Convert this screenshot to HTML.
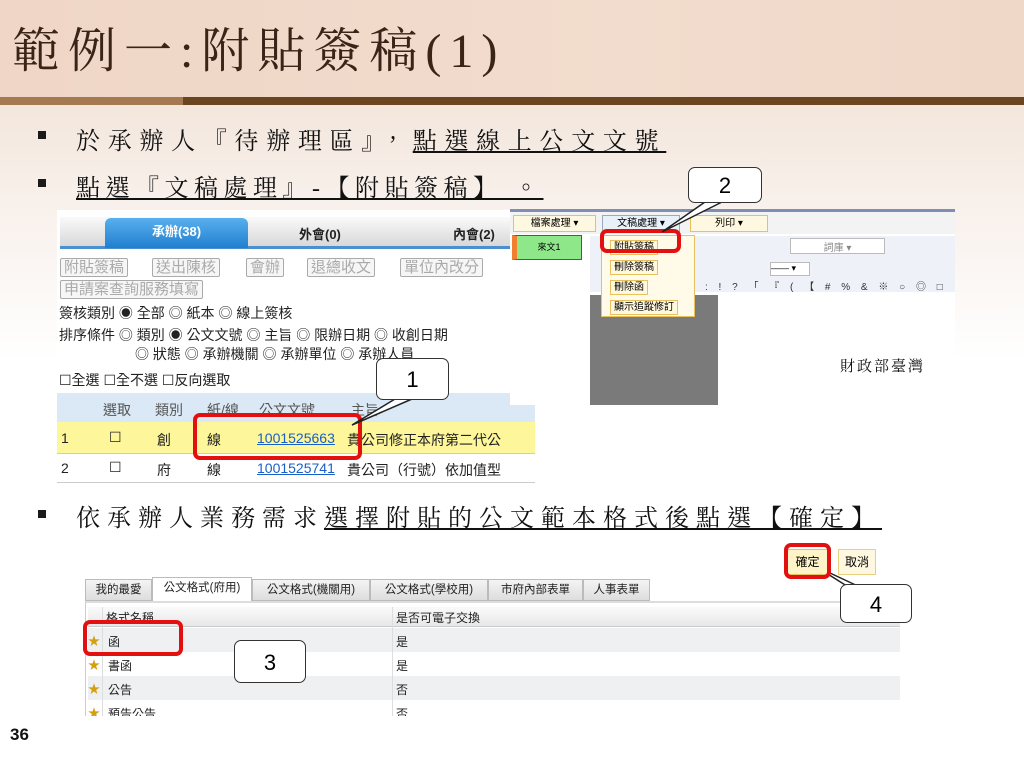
<!DOCTYPE html>
<html><head><meta charset="utf-8"><style>
*{margin:0;padding:0;box-sizing:border-box}
body{width:1024px;height:768px;position:relative;overflow:hidden;background:linear-gradient(180deg,#f3e6dc 100px,#f7eee8 180px,#fff 360px);font-family:"Liberation Sans","Noto Sans CJK TC",sans-serif}
.a{position:absolute}
.serif{font-family:"Liberation Serif","Noto Serif CJK TC",serif;color:#111;white-space:nowrap}
.bul{position:absolute;left:38px;width:8px;height:8px;background:#1a1a1a}
.cb{position:absolute;background:#fff;border:1.5px solid #333;border-radius:7px;font-size:22px;text-align:center;color:#000}
.red{position:absolute;border:4px solid #e31010;border-radius:7px}
.s{font-size:14px;color:#222;white-space:nowrap}
.btn{position:absolute;border:1px solid #aaa;border-radius:2px;color:#aaa;font-size:15px;padding:0 3px;height:19px;line-height:18px;background:#f6f6f6;white-space:nowrap}
.mi{position:absolute;left:8px;height:15px;border:1px solid #e8c060;background:#fff8dd;font-size:10px;padding:0 3px;line-height:13px;white-space:nowrap}
</style></head><body>
<div class="a" style="left:0;top:0;width:1024px;height:97px;background:linear-gradient(90deg,#efd6c6,#f2dccd 60%,#f0d8c8)"></div>
<div class="a serif" style="left:12px;top:12px;font-size:48px;color:#3a2418;letter-spacing:8px">範例一:附貼簽稿(1)</div>
<div class="a" style="left:0;top:97px;width:183px;height:8px;background:#a57a52"></div>
<div class="a" style="left:183px;top:97px;width:841px;height:8px;background:#6a4522"></div>

<div class="bul" style="top:131px"></div>
<div class="a serif" style="left:76px;top:121px;font-size:24px;letter-spacing:7.7px">於承辦人『待辦理區』，<u>點選線上公文文號</u></div>
<div class="bul" style="top:179px"></div>
<div class="a serif" style="left:76px;top:168px;font-size:24px;letter-spacing:5.5px"><u>點選『文稿處理』-【附貼簽稿】 。</u></div>

<!-- screenshot 1 -->
<div class="a" style="left:57px;top:210px;width:478px;height:280px;background:#fff;overflow:hidden">
 <div class="a" style="left:3px;top:7px;width:457px;height:32px;background:linear-gradient(#fafafa,#d8d8d8);border-bottom:3px solid #4a90d0"></div>
 <div class="a" style="left:48px;top:8px;width:143px;height:30px;background:linear-gradient(#5ab0ee,#1f7fcf);border-radius:6px 6px 0 0;color:#fff;font-weight:bold;font-size:13px;text-align:center;line-height:28px">承辦(38)</div>
 <div class="a" style="left:242px;top:14px;font-weight:bold;font-size:13px;color:#222">外會(0)</div>
 <div class="a" style="left:396px;top:14px;font-weight:bold;font-size:13px;color:#222">內會(2)</div>
 <div class="btn" style="left:3px;top:48px">附貼簽稿</div>
 <div class="btn" style="left:95px;top:48px">送出陳核</div>
 <div class="btn" style="left:189px;top:48px">會辦</div>
 <div class="btn" style="left:250px;top:48px">退總收文</div>
 <div class="btn" style="left:343px;top:48px">單位內改分</div>
 <div class="btn" style="left:3px;top:70px">申請案查詢服務填寫</div>
 <div class="a s" style="left:2px;top:93px">簽核類別 ◉ 全部 ◎ 紙本 ◎ 線上簽核</div>
 <div class="a s" style="left:2px;top:115px">排序條件 ◎ 類別 ◉ 公文文號 ◎ 主旨 ◎ 限辦日期 ◎ 收創日期</div>
 <div class="a s" style="left:78px;top:134px">◎ 狀態 ◎ 承辦機關 ◎ 承辦單位 ◎ 承辦人員</div>
 <div class="a s" style="left:2px;top:160px">☐全選 ☐全不選 ☐反向選取</div>
 <div class="a" style="left:0;top:183px;width:478px;height:29px;background:#dbe8f5"></div>
 <div class="a" style="left:0;top:212px;width:478px;height:31px;background:#fdf69a"></div>
 <div class="a" style="left:0;top:243px;width:478px;height:1px;background:#ccc"></div>
 <div class="a" style="left:0;top:272px;width:478px;height:1px;background:#ccc"></div>
 <div class="a s" style="left:46px;top:190px;color:#555">選取</div>
 <div class="a s" style="left:98px;top:190px;color:#555">類別</div>
 <div class="a s" style="left:150px;top:190px;color:#555">紙/線</div>
 <div class="a s" style="left:202px;top:190px;color:#555">公文文號</div>
 <div class="a s" style="left:294px;top:190px;color:#555">主旨</div>
 <div class="a s" style="left:4px;top:220px">1</div><div class="a s" style="left:52px;top:219px">☐</div><div class="a s" style="left:100px;top:220px">創</div><div class="a s" style="left:150px;top:220px">線</div><div class="a s" style="left:200px;top:220px;color:#1a5fc8;text-decoration:underline">1001525663</div><div class="a s" style="left:290px;top:220px">貴公司修正本府第二代公</div>
 <div class="a s" style="left:4px;top:250px">2</div><div class="a s" style="left:52px;top:249px">☐</div><div class="a s" style="left:100px;top:250px">府</div><div class="a s" style="left:150px;top:250px">線</div><div class="a s" style="left:200px;top:250px;color:#1a5fc8;text-decoration:underline">1001525741</div><div class="a s" style="left:290px;top:250px">貴公司（行號）依加值型</div>
</div>
<div class="red" style="left:193px;top:413px;width:169px;height:47px"></div>

<!-- screenshot 2 -->
<div class="a" style="left:510px;top:209px;width:445px;height:196px;background:#fff;overflow:hidden;border-top:3px solid #7f8fb0">
 <div class="a" style="left:0;top:0;width:445px;height:22px;background:#f3f3f3"></div>
 <div class="a" style="left:3px;top:3px;width:83px;height:17px;border:1px solid #e8c060;background:#fff8e0;font-size:10px;text-align:center;line-height:15px">檔案處理 ▾</div>
 <div class="a" style="left:92px;top:3px;width:78px;height:17px;border:1px solid #9ab;background:#e8f0f8;font-size:10px;text-align:center;line-height:15px">文稿處理 ▾</div>
 <div class="a" style="left:180px;top:3px;width:78px;height:17px;border:1px solid #e8c060;background:#fff8e0;font-size:10px;text-align:center;line-height:15px">列印 ▾</div>
 <div class="a" style="left:2px;top:23px;width:70px;height:25px;background:#8ee88a;border:1px solid #555;border-left:5px solid #f08030;font-size:9px;text-align:center;line-height:22px">來文1</div>
 <div class="a" style="left:80px;top:24px;width:365px;height:56px;background:#eef2f8"></div>
 <div class="a" style="left:280px;top:26px;width:95px;height:16px;border:1px solid #bbb;background:#fff;font-size:10px;color:#888;text-align:center">詞庫 ▾</div>
 <div class="a" style="left:260px;top:50px;width:40px;height:14px;border:1px solid #bbb;background:#fff;font-size:9px">—— ▾</div>
 <div class="a" style="left:195px;top:66px;font-size:10px;color:#333;letter-spacing:4px;white-space:nowrap">: ! ? 「 『 ( 【 # % &amp; ※ ○ ◎ □</div>
 <div class="a" style="left:80px;top:83px;width:128px;height:113px;background:#7a7a7a"></div>
 <div class="a" style="left:208px;top:83px;width:237px;height:113px;background:#fff"></div>
 <div class="a serif" style="left:330px;top:143px;font-size:15px;letter-spacing:2px">財政部臺灣</div>
 <div class="a" style="left:91px;top:23px;width:94px;height:82px;background:#fffbe8;border:1px solid #e8c060">
  <div class="mi" style="top:4px">附貼簽稿</div>
  <div class="mi" style="top:24px">刪除簽稿</div>
  <div class="mi" style="top:44px">刪除函</div>
  <div class="mi" style="top:64px">顯示追蹤修訂</div>
 </div>
</div>
<div class="red" style="left:600px;top:229px;width:81px;height:24px"></div>

<svg class="a" style="left:0;top:0" width="1024" height="768">
<polyline points="395,399 352,425 412,399" fill="#fff" stroke="#222" stroke-width="1.5"/>
<polyline points="705,202 662,232 722,202" fill="#fff" stroke="#222" stroke-width="1.5"/>
<polyline points="850,588 815,566 862,588" fill="#fff" stroke="#222" stroke-width="1.5"/>
<polyline points="236,655 165,646 236,667" fill="#fff" stroke="#222" stroke-width="1.5"/>
</svg>
<div class="cb" style="left:376px;top:358px;width:73px;height:42px;line-height:42px">1</div>
<div class="cb" style="left:688px;top:167px;width:74px;height:36px;line-height:36px">2</div>

<div class="bul" style="top:510px"></div>
<div class="a serif" style="left:76px;top:498px;font-size:24px;letter-spacing:7px">依承辦人業務需求<u>選擇附貼的公文範本格式後點選【確定】</u></div>

<!-- screenshot 3 -->
<div class="a" style="left:787px;top:549px;width:41px;height:26px;background:#fff3c8;border:1px solid #e8c060;font-size:12px;text-align:center;line-height:24px">確定</div>
<div class="a" style="left:838px;top:549px;width:38px;height:26px;background:#fff8e0;border:1px solid #e8d080;font-size:12px;text-align:center;line-height:24px">取消</div>
<div class="red" style="left:784px;top:543px;width:47px;height:36px"></div>
<div class="a" style="left:85px;top:577px;width:565px;height:24px;font-size:11.5px;color:#222">
 <div class="a" style="left:0;top:2px;width:67px;height:22px;background:linear-gradient(#f4f4f4,#ddd);border:1px solid #bbb;text-align:center;line-height:20px">我的最愛</div>
 <div class="a" style="left:67px;top:0;width:100px;height:24px;background:#fff;border:1px solid #bbb;border-bottom:none;text-align:center;line-height:20px">公文格式(府用)</div>
 <div class="a" style="left:167px;top:2px;width:118px;height:22px;background:linear-gradient(#f4f4f4,#ddd);border:1px solid #bbb;text-align:center;line-height:20px">公文格式(機關用)</div>
 <div class="a" style="left:285px;top:2px;width:118px;height:22px;background:linear-gradient(#f4f4f4,#ddd);border:1px solid #bbb;text-align:center;line-height:20px">公文格式(學校用)</div>
 <div class="a" style="left:403px;top:2px;width:95px;height:22px;background:linear-gradient(#f4f4f4,#ddd);border:1px solid #bbb;text-align:center;line-height:20px">市府內部表單</div>
 <div class="a" style="left:498px;top:2px;width:67px;height:22px;background:linear-gradient(#f4f4f4,#ddd);border:1px solid #bbb;text-align:center;line-height:20px">人事表單</div>
</div>
<div class="a" style="left:85px;top:601px;width:815px;height:115px;border-left:1px solid #ccc;border-top:2px solid #ddd;background:#fff;overflow:hidden;font-size:12px;color:#222">
 <div class="a" style="left:2px;top:4px;width:813px;height:20px;background:linear-gradient(#fafafa,#e8e8e8);border-bottom:1px solid #ccc"></div>
 <div class="a" style="left:20px;top:6px">格式名稱</div><div class="a" style="left:310px;top:6px">是否可電子交換</div>
 <div class="a" style="left:2px;top:25px;width:813px;height:24px;background:#eef0f2"></div>
 <div class="a" style="left:2px;top:73px;width:813px;height:24px;background:#eef0f2"></div>
 <div class="a" style="left:16px;top:4px;width:1px;height:115px;background:#ddd"></div>
 <div class="a" style="left:306px;top:4px;width:1px;height:115px;background:#ddd"></div>
 <div class="a" style="left:2px;top:29px;color:#d4a010">★</div><div class="a" style="left:22px;top:30px">函</div><div class="a" style="left:310px;top:30px">是</div>
 <div class="a" style="left:2px;top:53px;color:#d4a010">★</div><div class="a" style="left:22px;top:54px">書函</div><div class="a" style="left:310px;top:54px">是</div>
 <div class="a" style="left:2px;top:77px;color:#d4a010">★</div><div class="a" style="left:22px;top:78px">公告</div><div class="a" style="left:310px;top:78px">否</div>
 <div class="a" style="left:2px;top:101px;color:#d4a010">★</div><div class="a" style="left:22px;top:102px">預告公告</div><div class="a" style="left:310px;top:102px">否</div>
</div>
<div class="red" style="left:83px;top:620px;width:100px;height:36px"></div>
<div class="cb" style="left:234px;top:640px;width:72px;height:43px;line-height:43px">3</div>
<div class="cb" style="left:840px;top:584px;width:72px;height:39px;line-height:39px">4</div>

<div class="a" style="left:10px;top:725px;font-weight:bold;font-size:17px;color:#111">36</div>
</body></html>
